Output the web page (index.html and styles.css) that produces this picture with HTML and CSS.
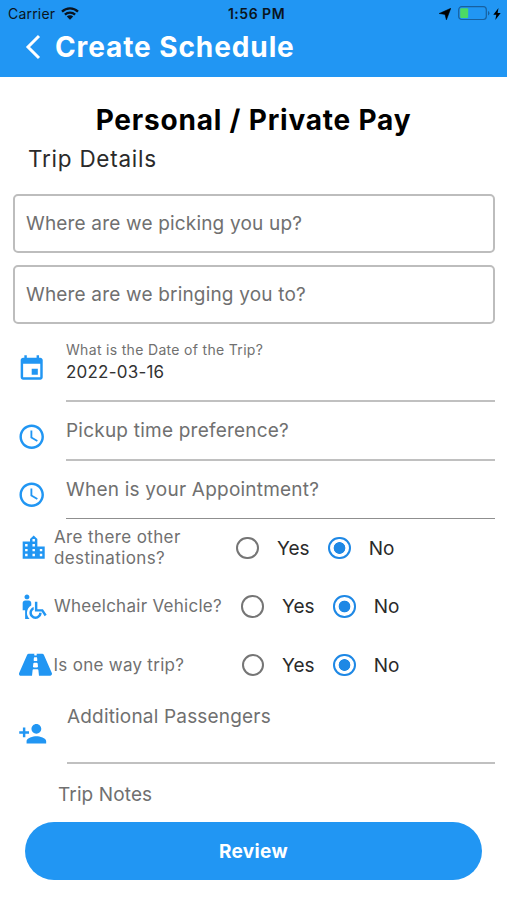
FILE: index.html
```html
<!DOCTYPE html>
<html lang="en">
<head>
<meta charset="utf-8">
<title>Create Schedule</title>
<link rel="stylesheet" href="styles.css">
</head>
<body>
<header class="top">
  <div class="status">
    <div class="status-left"><span class="carrier">Carrier</span>
      <svg class="wifi" viewBox="0 0 18 13"><path d="M1 4.6a11.6 11.6 0 0 1 16 0M3.9 7.6a7.4 7.4 0 0 1 10.2 0" fill="none" stroke="#0a1420" stroke-width="2.3"/><path d="M9 12.8 5.8 9.6a4.6 4.6 0 0 1 6.4 0z" fill="#0a1420"/></svg>
    </div>
    <span class="time">1:56 PM</span>
    <div class="status-right">
      <svg class="arrow" viewBox="0 0 12 12"><path d="M11.8.3 7.4 11.9 6 6.4 .1 5.5z" fill="#000" stroke="#000" stroke-width=".5"/></svg>
      <svg class="battery" viewBox="0 0 32 15"><rect x=".7" y=".7" width="27.6" height="12.8" rx="3" fill="none" stroke="#17609f" stroke-width="1.2"/><rect x="2.2" y="2.2" width="8" height="9.8" rx="1" fill="#4cd964"/><path d="M30 5v4.4a2.4 2.4 0 0 0 0-4.4z" fill="#17609f"/></svg>
      <svg class="bolt" viewBox="0 0 8 12"><path d="M5.5 0 .3 6.8h3L2.3 12l5.4-7H4.6z" fill="#000"/></svg>
    </div>
  </div>
  <div class="nav">
    <svg class="back" viewBox="0 0 16 26"><path d="M14 2 3 13l11 11" fill="none" stroke="#fff" stroke-width="3"/></svg>
    <h1>Create Schedule</h1>
  </div>
</header>
<main>
  <h2>Personal / Private Pay</h2>
  <h3>Trip Details</h3>
  <div class="box pick">Where are we picking you up?</div>
  <div class="box bring">Where are we bringing you to?</div>

  <div class="line date">
    <svg class="icon" viewBox="0 0 24 24"><path d="M17 12h-5v5h5v-5zM16 1v2H8V1H6v2H5c-1.11 0-1.99.9-1.99 2L3 19c0 1.1.89 2 2 2h14c1.1 0 2-.9 2-2V5c0-1.1-.9-2-2-2h-1V1h-2zm3 18H5V8h14v11z"/></svg>
    <div class="field"><span class="label">What is the Date of the Trip?</span><span class="value">2022-03-16</span></div>
  </div>
  <div class="line pickup">
    <svg class="icon" viewBox="0 0 24 24"><path d="M11.99 2C6.47 2 2 6.48 2 12s4.47 10 9.99 10C17.52 22 22 17.52 22 12S17.52 2 11.99 2zM12 20c-4.42 0-8-3.58-8-8s3.58-8 8-8 8 3.58 8 8-3.58 8-8 8zm.5-13H11v6l5.25 3.15.75-1.23-4.5-2.67z"/></svg>
    <div class="field">Pickup time preference?</div>
  </div>
  <div class="line appt">
    <svg class="icon" viewBox="0 0 24 24"><path d="M11.99 2C6.47 2 2 6.48 2 12s4.47 10 9.99 10C17.52 22 22 17.52 22 12S17.52 2 11.99 2zM12 20c-4.42 0-8-3.58-8-8s3.58-8 8-8 8 3.58 8 8-3.58 8-8 8zm.5-13H11v6l5.25 3.15.75-1.23-4.5-2.67z"/></svg>
    <div class="field">When is your Appointment?</div>
  </div>

  <div class="choice dest">
    <svg class="icon" viewBox="0 0 24 24"><path d="M15 11V5l-3-3-3 3v2H3v14h18V11h-6zm-8 8H5v-2h2v2zm0-4H5v-2h2v2zm0-4H5V9h2v2zm6 8h-2v-2h2v2zm0-4h-2v-2h2v2zm0-4h-2V9h2v2zm0-4h-2V5h2v2zm6 12h-2v-2h2v2zm0-4h-2v-2h2v2z"/></svg>
    <span class="question">Are there other<br>destinations?</span>
    <span class="radio"></span><span class="opt yes">Yes</span><span class="radio on"></span><span class="opt">No</span>
  </div>
  <div class="choice wheel">
    <svg class="icon" viewBox="0 0 24 24"><path d="M4.5 4c0-1.11.89-2 2-2s2 .89 2 2-.89 2-2 2-2-.89-2-2zm5.5 6.95V9c0-1.1-.9-2-2-2H5c-1.1 0-2 .9-2 2v6h2v7h3.5v-.11c-1.24-1.26-2-2.99-2-4.89 0-2.58 1.41-4.84 3.5-6.05zM16.5 17c0 1.65-1.35 3-3 3s-3-1.35-3-3c0-1.11.61-2.06 1.5-2.58v-2.16c-2.02.64-3.5 2.51-3.5 4.74 0 2.76 2.24 5 5 5s5-2.24 5-5h-2zm3.04-3H15V8h-2v8h5.46l2.47 3.71 1.66-1.11L19.54 14z"/></svg>
    <span class="question">Wheelchair Vehicle?</span>
    <span class="radio"></span><span class="opt yes">Yes</span><span class="radio on"></span><span class="opt">No</span>
  </div>
  <div class="choice oneway">
    <svg class="icon road" viewBox="0 0 576 512"><path d="M573.19 402.67l-139.79-320C428.43 71.29 417.6 64 405.68 64h-97.59l2.45 23.16c.5 4.72-3.21 8.84-7.96 8.84h-29.16c-4.75 0-8.46-4.12-7.96-8.84L267.91 64h-97.59c-11.93 0-22.76 7.29-27.73 18.67L2.8 402.67C-6.45 423.86 8.31 448 30.54 448h196.84l10.31-97.68c.86-8.14 7.72-14.32 15.91-14.32h68.8c8.19 0 15.05 6.18 15.91 14.32L348.62 448h196.84c22.23 0 36.99-24.14 27.73-45.33zM260.4 135.16a8 8 0 0 1 7.96-7.16h39.29c4.09 0 7.53 3.09 7.96 7.16l4.6 43.58c.75 7.09-4.81 13.26-11.93 13.26h-40.54c-7.13 0-12.68-6.17-11.93-13.26l4.59-43.58zM315.64 304h-55.29c-9.5 0-16.91-8.23-15.91-17.68l5.07-48c.86-8.14 7.72-14.32 15.91-14.32h45.15c8.19 0 15.05 6.18 15.91 14.32l5.07 48c1 9.45-6.41 17.68-15.91 17.68z"/></svg>
    <span class="question">Is one way trip?</span>
    <span class="radio"></span><span class="opt yes">Yes</span><span class="radio on"></span><span class="opt">No</span>
  </div>

  <div class="line extra">
    <svg class="icon" viewBox="0 0 24 24"><path d="M15 12c2.21 0 4-1.79 4-4s-1.79-4-4-4-4 1.79-4 4 1.79 4 4 4zm-9-2V7H4v3H1v2h3v3h2v-3h3v-2H6zm9 4c-2.67 0-8 1.34-8 4v2h16v-2c0-2.66-5.33-4-8-4z"/></svg>
    <div class="field">Additional Passengers</div>
  </div>
  <div class="notes">Trip Notes</div>
  <button class="review">Review</button>
</main>
</body>
</html>
```

FILE: styles.css
```css
* { box-sizing: border-box; }
body { margin: 0; width: 507px; height: 900px; overflow: hidden; background: #fff; color: #2a2a2a; font-family: Inter, "Liberation Sans", sans-serif; white-space: nowrap; }
h1, h2, h3 { margin: 0; }
svg { display: block; flex: none; }

.top { height: 77px; background: #2196f3; }
.status { height: 27px; padding: 0 6px 0 8px; display: grid; grid-template-columns: 1fr auto 1fr; align-items: center; color: #0a1420; font-size: 14px; }
.status-left, .status-right { display: flex; align-items: center; }
.carrier { letter-spacing: .2px; }
.wifi { width: 18px; height: 13px; margin-left: 6px; }
.time { font-weight: 600; letter-spacing: .5px; padding-left: 4px; }
.status-right { justify-content: flex-end; }
.arrow { width: 12px; height: 12px; margin-right: 7px; }
.battery { width: 32px; height: 15px; margin-right: 3px; }
.bolt { width: 8px; height: 12px; }
.nav { display: flex; align-items: center; height: 40px; padding-left: 25px; color: #fff; }
.back { width: 16px; height: 26px; margin-right: 14px; }
h1 { font-size: 28px; line-height: 36px; font-weight: 700; letter-spacing: .9px; padding-bottom: 1px; }

h2 { height: 43px; line-height: 43px; margin-top: 22px; text-align: center; color: #000; font-size: 28px; font-weight: 700; letter-spacing: .8px; }
h3 { height: 34px; line-height: 33px; padding-left: 28px; font-size: 22.5px; font-weight: 400; letter-spacing: .75px; }
.box { height: 59px; line-height: 55px; margin: 0 12px 0 13px; padding-left: 11px; border: 2px solid #bdbdbd; border-radius: 5px; font-size: 19px; letter-spacing: .18px; color: #707070; }
.pick { margin-top: 18px; }
.bring { margin-top: 12px; }

.icon { width: 29.4px; height: 29.4px; fill: #2196f3; }
.line { display: flex; padding: 0 12px 0 17px; color: #707070; font-size: 19px; letter-spacing: .22px; }
.field { flex: 1; margin-left: 19.6px; border-bottom: 2px solid #c0c0c0; display: flex; flex-direction: column; }
.date { height: 78px; }
.date .icon { margin-top: 29.5px; }
.label { font-size: 14px; line-height: 18px; margin-top: 16.5px; letter-spacing: .32px; }
.value { font-size: 17px; line-height: 22px; margin-top: 2.5px; color: #333; }
.pickup, .appt { height: 58.6px; }
.pickup .icon, .appt .icon { margin-top: 19.6px; }
.pickup .field, .appt .field { line-height: 58px; }
.appt .field { border-bottom: 1px solid #8f8f8f; }

.choice { display: flex; align-items: center; height: 58.6px; padding-left: 19px; }
.dest { height: 58px; }
.question { flex: none; width: 182.5px; font-size: 17px; line-height: 21px; color: #707070; letter-spacing: .38px; margin-left: 5.6px; }
.wheel .question, .oneway .question { letter-spacing: .28px; }
.road { width: 33px; }
.oneway .question { margin-left: 1.5px; }
.wheel .question { width: 187.5px; }
.oneway .question { width: 188px; }
.radio { width: 22.6px; height: 22.6px; flex: none; border: 2.4px solid #757575; border-radius: 50%; }
.on { border-color: #1e88e5; background: radial-gradient(circle, #1e88e5 5.5px, transparent 6.2px); }
.opt { flex: none; width: 51px; padding-left: 18px; font-size: 19px; }
.opt.yes { width: 69px; }

.extra { height: 70px; padding-left: 18px; }
.extra .icon { margin-top: 25px; }
.extra .field { line-height: 45px; letter-spacing: .18px; }
.notes { height: 57.6px; line-height: 62px; padding-left: 58px; font-size: 19px; letter-spacing: .12px; color: #707070; }
.review { display: block; width: 457px; height: 58px; margin-left: 25px; padding-top: 3px; border: 0; border-radius: 29px; background: #2196f3; color: #fff; font: 700 19px Inter, sans-serif; letter-spacing: .35px; }
```
